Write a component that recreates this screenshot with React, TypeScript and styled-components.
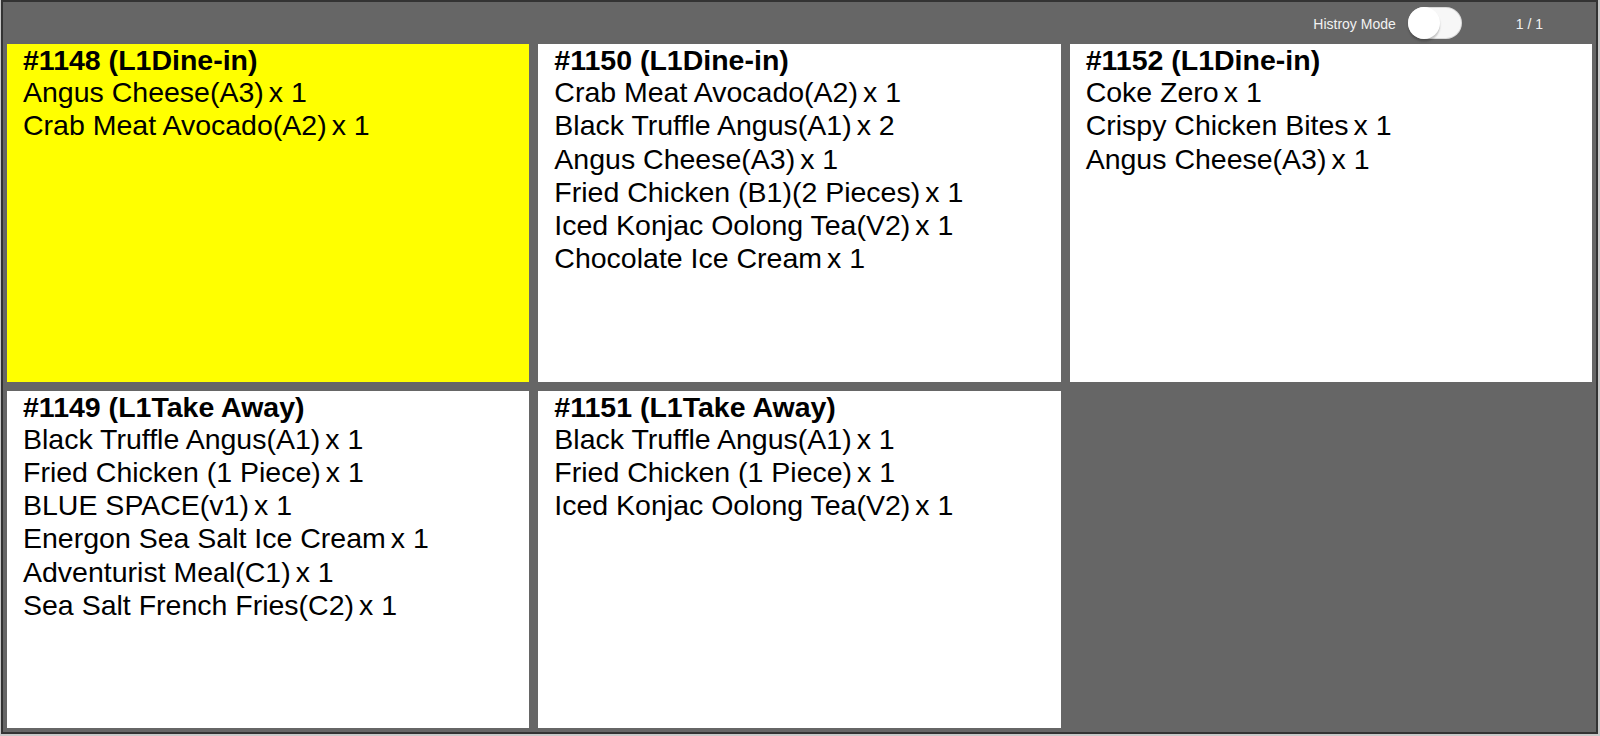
import React, { useState } from 'react';
import styled, { createGlobalStyle } from 'styled-components';

interface orderItem {
    name: string;
    qty: number;
}

interface order {
    id: number;
    mode: string;
    items: orderItem[];
    highlight?: boolean;
}

const GlobalStyle = createGlobalStyle`
    html, body {
        margin: 0;
        padding: 0;
        background: #c8c8c8;
        font-family: "Liberation Sans", Arial, sans-serif;
    }
`;

export const Screen = styled.div`
    box-sizing: border-box;
    display: flex;
    flex-direction: column;
    width: 1597px;
    height: 734px;
    margin: 0 2px 2px 1px;
    border: 2px solid #333333;
    background-color: #666666;
    overflow: hidden;
`;

export const TopBar = styled.div`
    display: flex;
    align-items: center;
    justify-content: flex-end;
    height: 42px;
    flex-shrink: 0;
    color: #f2f2f2;
    font-size: 14px;
`;

export const ModeLabel = styled.span`
    margin-right: 12px;
    padding-top: 1px;
`;

export const SwitchTrack = styled.button<{ $on: boolean }>`
    position: relative;
    box-sizing: border-box;
    width: 54px;
    height: 32px;
    padding: 0;
    margin: 0;
    border: 1px solid rgba(0, 0, 0, 0.12);
    border-radius: 16px;
    background-color: ${p => (p.$on ? '#1989fa' : '#f7f7f7')};
    cursor: pointer;
    transition: background-color 0.3s;
`;

export const SwitchKnob = styled.span<{ $on: boolean }>`
    position: absolute;
    top: -1px;
    left: ${p => (p.$on ? '21px' : '-1px')};
    width: 32px;
    height: 32px;
    border-radius: 50%;
    background-color: #ffffff;
    box-shadow: 0 3px 1px 0 rgba(0, 0, 0, 0.05), 0 2px 2px 0 rgba(0, 0, 0, 0.12), 0 3px 3px 0 rgba(0, 0, 0, 0.06);
    transition: left 0.3s;
`;

export const PageInfo = styled.span`
    margin-left: 54px;
    margin-right: 53px;
    padding-top: 1px;
`;

export const OrderGrid = styled.div`
    flex: 1;
    display: grid;
    grid-template-columns: repeat(3, 1fr);
    grid-template-rows: repeat(2, 1fr);
    gap: 9px;
    padding: 0 4px 4px 4px;
    min-height: 0;
`;

export const OrderCard = styled.div<{ $highlight?: boolean }>`
    padding: 1px 16px 0 16px;
    background-color: ${p => (p.$highlight ? '#ffff00' : '#ffffff')};
    color: #000000;
    overflow: hidden;
`;

export const OrderTitle = styled.div`
    font-size: 28.5px;
    font-weight: 700;
    line-height: 31px;
    white-space: nowrap;
`;

export const OrderLine = styled.div`
    display: flex;
    font-size: 28.5px;
    line-height: 33.3px;
    white-space: nowrap;
`;

export const Qty = styled.span`
    margin-left: 5px;
`;

const orders: order[] = [
    {
        id: 1148,
        mode: 'L1Dine-in',
        highlight: true,
        items: [
            { name: 'Angus Cheese(A3)', qty: 1 },
            { name: 'Crab Meat Avocado(A2)', qty: 1 },
        ],
    },
    {
        id: 1150,
        mode: 'L1Dine-in',
        items: [
            { name: 'Crab Meat Avocado(A2)', qty: 1 },
            { name: 'Black Truffle Angus(A1)', qty: 2 },
            { name: 'Angus Cheese(A3)', qty: 1 },
            { name: 'Fried Chicken (B1)(2 Pieces)', qty: 1 },
            { name: 'Iced Konjac Oolong Tea(V2)', qty: 1 },
            { name: 'Chocolate Ice Cream', qty: 1 },
        ],
    },
    {
        id: 1152,
        mode: 'L1Dine-in',
        items: [
            { name: 'Coke Zero', qty: 1 },
            { name: 'Crispy Chicken Bites', qty: 1 },
            { name: 'Angus Cheese(A3)', qty: 1 },
        ],
    },
    {
        id: 1149,
        mode: 'L1Take Away',
        items: [
            { name: 'Black Truffle Angus(A1)', qty: 1 },
            { name: 'Fried Chicken (1 Piece)', qty: 1 },
            { name: 'BLUE SPACE(v1)', qty: 1 },
            { name: 'Energon Sea Salt Ice Cream', qty: 1 },
            { name: 'Adventurist Meal(C1)', qty: 1 },
            { name: 'Sea Salt French Fries(C2)', qty: 1 },
        ],
    },
    {
        id: 1151,
        mode: 'L1Take Away',
        items: [
            { name: 'Black Truffle Angus(A1)', qty: 1 },
            { name: 'Fried Chicken (1 Piece)', qty: 1 },
            { name: 'Iced Konjac Oolong Tea(V2)', qty: 1 },
        ],
    },
];

export default function App() {
    const [history, setHistory] = useState(false);

    const cards = orders.map(o =>
        <OrderCard key={o.id} $highlight={o.highlight}>
            <OrderTitle>#{o.id} ({o.mode})</OrderTitle>
            {o.items.map((it, i) =>
                <OrderLine key={i}>
                    <span>{it.name}</span>
                    <Qty>x {it.qty}</Qty>
                </OrderLine>
            )}
        </OrderCard>
    );

    return (
        <>
            <GlobalStyle />
            <Screen>
                <TopBar>
                    <ModeLabel>Histroy Mode</ModeLabel>
                    <SwitchTrack $on={history} onClick={() => setHistory(!history)}>
                        <SwitchKnob $on={history} />
                    </SwitchTrack>
                    <PageInfo>1 / 1</PageInfo>
                </TopBar>
                <OrderGrid>
                    {cards}
                </OrderGrid>
            </Screen>
        </>
    );
}
